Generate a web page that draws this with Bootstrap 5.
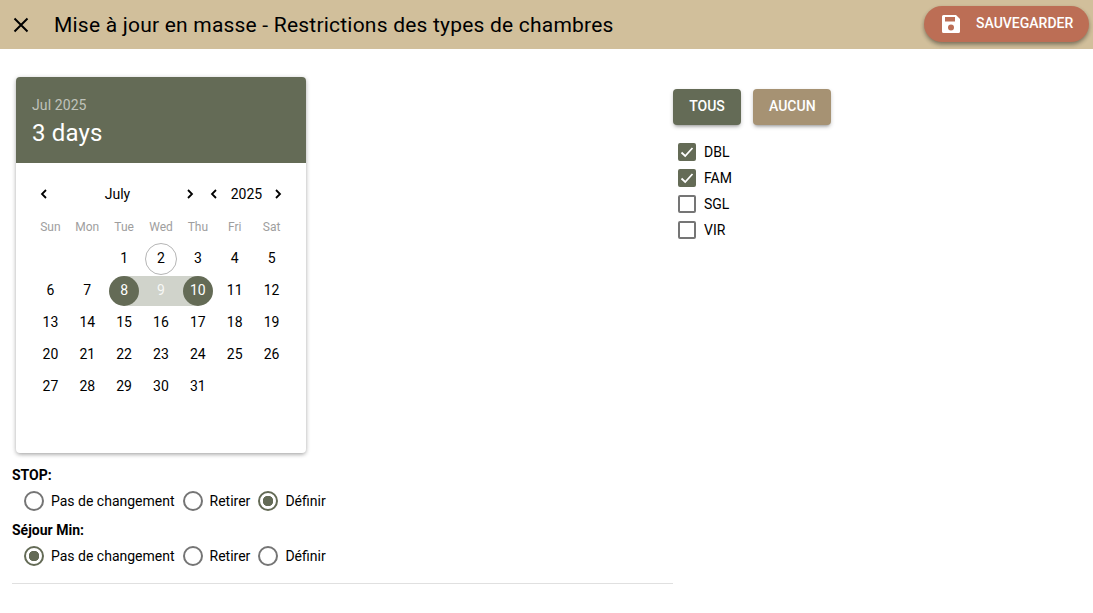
<!DOCTYPE html>
<html lang="fr">
<head>
<meta charset="utf-8">
<title>Mise à jour en masse</title>
<link rel="stylesheet" href="https://cdn.jsdelivr.net/npm/bootstrap@5.3.0/dist/css/bootstrap.min.css">
<style>
html,body{height:100%;overflow:hidden}
body{font-family:Roboto,"Liberation Sans",sans-serif;font-size:14px;color:#000;background:#fff}
.top-bar{height:49px;background:#d1bf9b;padding:0 4px 0 12px}
.close-ico{width:18px;height:18px;display:block}
.top-title{font-size:21px;font-weight:400;line-height:26px;margin:0 0 0 24px;letter-spacing:.21px}
.save-btn{height:36px;width:165px;border-radius:18px;background:#bc6e55;color:#fff;border:0;font-size:14px;font-weight:500;padding:0 16px 1px 17px;margin-top:-1px;box-shadow:0 3px 5px -1px rgba(0,0,0,.3),0 2px 4px rgba(0,0,0,.2);gap:15px}
.left-pane{width:661px;margin-left:12px;padding-top:28px}
.cal-box{width:290px;height:376px;margin-left:4px;border-radius:4px;background:#fff;overflow:hidden;box-shadow:0 2px 4px -1px rgba(0,0,0,.25),0 1px 5px rgba(0,0,0,.2)}
.cal-head{height:86px;background:#646b56;color:#fff;padding:19px 16px 0}
.cal-year{font-size:14px;line-height:18px;color:rgba(255,255,255,.6);letter-spacing:.1px}
.cal-range{font-size:24px;line-height:32px;margin-top:3px;letter-spacing:.15px}
.cal-body{padding:16px 16px 0}
.cal-nav{height:30px}
.nav-arrow{width:24px;height:30px;flex:none}
.nav-arrow svg{width:10px;height:12px}
.nav-month{width:122px;text-align:center;padding-left:1px}
.nav-year{width:40px;text-align:center;padding-left:1px}
.cal-grid{display:grid;grid-template-columns:repeat(7,1fr);grid-template-rows:33px;grid-auto-rows:32px;text-align:center}
.wk{color:#9e9e9e;font-size:12px;line-height:20px;padding-top:8px}
.dy{height:32px;display:flex;align-items:center;justify-content:center;position:relative;z-index:0}
.dy-today::before{content:"";position:absolute;left:50%;top:1px;width:32px;height:32px;margin-left:-16px;border:1.5px solid #b5b5b5;border-radius:50%}
.dy-mid{color:rgba(255,255,255,.85)}
.dy-mid::before,.dy-start::before,.dy-end::before{content:"";position:absolute;top:2px;height:30px;background:#d0d3cb;z-index:-2}
.dy-mid::before{left:0;right:0}
.dy-start::before{left:50%;right:0}
.dy-end::before{left:0;right:50%}
.dy-start,.dy-end{color:#fff}
.dy-start::after,.dy-end::after{content:"";position:absolute;left:50%;top:2px;width:30px;height:30px;margin-left:-15px;border-radius:50%;background:#646b56;z-index:-1}
.grp-label{font-weight:700;line-height:21px}
.first-label{margin-top:12px}
.radio-line{height:30px;padding-left:12px;gap:8px}
.radio-line .form-check-input{margin:0 7px 0 0;float:none}
.radio-line label{line-height:20px}
.opt-input.form-check-input{width:20px;height:20px;flex:none;border:2px solid #757575;background-color:#fff;background-image:none}
.opt-input.form-check-input:checked{border-color:#646b56;background-color:#fff;background-image:radial-gradient(circle,#646b56 0,#646b56 5px,transparent 5.5px)}
.next-label{margin-top:4px}
.sep{border:0;border-top:1px solid #e0e0e0;opacity:1;margin:12px 0 0}
.right-pane{padding-top:40px}
.act-btn{height:36px;border:0;border-radius:4px;color:#fff;font-size:14px;font-weight:500;padding:0 16px 1px;box-shadow:0 3px 3px -2px rgba(0,0,0,.25),0 2px 4px rgba(0,0,0,.2)}
.act-btn:hover,.save-btn:hover{color:#fff}
.act-all{width:68px;background:#646b56}
.act-none{width:78px;background:#a69273;margin-left:12px}
.type-list{margin:14px 0 0 5px}
.type-row{height:26px}
.type-row .form-check-input{margin:0 8px 0 0;float:none}
.tick.form-check-input{width:18px;height:18px;flex:none;border:2px solid #757575;border-radius:2px;background-color:#fff}
.tick.form-check-input:checked{border-color:#646b56;background-color:#646b56;background-size:14px;background-image:url("data:image/svg+xml,%3csvg xmlns='http://www.w3.org/2000/svg' viewBox='0 0 14 14'%3e%3cpath fill='none' stroke='%23fff' stroke-width='1.8' d='M1.5 7.5 5.2 11 12.5 3'/%3e%3c/svg%3e")}
</style>
</head>
<body>
<header class="top-bar d-flex align-items-center justify-content-between">
  <div class="d-flex align-items-center">
    <svg class="close-ico" viewBox="0 0 18 18" aria-hidden="true"><path d="M2.5 2.500 15.500 15.500M15.500 2.500 2.500 15.500" stroke="#000" stroke-width="2" fill="none"/></svg>
    <h1 class="top-title">Mise à jour en masse - Restrictions des types de chambres</h1>
  </div>
  <button type="button" class="btn save-btn d-flex align-items-center text-uppercase">
    <svg width="20" height="20" viewBox="0 0 20 20" aria-hidden="true" class="flex-shrink-0"><path fill="#fff" fill-rule="evenodd" d="M2.5 1H15l4 4v12.500a1.500 1.500 0 0 1-1.500 1.500h-15A1.500 1.500 0 0 1 1 17.500v-15A1.500 1.500 0 0 1 2.500 1ZM4 3v4.500h10V3ZM10 10.500a3 3 0 1 0 0 6 3 3 0 0 0 0-6Z"/></svg>
    Sauvegarder
  </button>
</header>
<main class="d-flex align-items-start">
  <section class="left-pane flex-shrink-0">
    <div class="cal-box">
      <div class="cal-head">
        <div class="cal-year">Jul 2025</div>
        <div class="cal-range">3 days</div>
      </div>
      <div class="cal-body">
        <div class="cal-nav d-flex align-items-center">
          <span class="nav-arrow d-flex align-items-center justify-content-center"><svg viewBox="0 0 10 12"><path d="M7 2 3 6 7 10" fill="none" stroke="#000" stroke-width="1.800"/></svg></span>
          <span class="nav-month">July</span>
          <span class="nav-arrow d-flex align-items-center justify-content-center"><svg viewBox="0 0 10 12"><path d="M3 2 7 6 3 10" fill="none" stroke="#000" stroke-width="1.800"/></svg></span>
          <span class="nav-arrow d-flex align-items-center justify-content-center"><svg viewBox="0 0 10 12"><path d="M7 2 3 6 7 10" fill="none" stroke="#000" stroke-width="1.800"/></svg></span>
          <span class="nav-year">2025</span>
          <span class="nav-arrow d-flex align-items-center justify-content-center"><svg viewBox="0 0 10 12"><path d="M3 2 7 6 3 10" fill="none" stroke="#000" stroke-width="1.800"/></svg></span>
        </div>
        <div class="cal-grid">
          <div class="wk">Sun</div><div class="wk">Mon</div><div class="wk">Tue</div><div class="wk">Wed</div><div class="wk">Thu</div><div class="wk">Fri</div><div class="wk">Sat</div>
          <div class="dy"></div><div class="dy"></div><div class="dy">1</div><div class="dy dy-today">2</div><div class="dy">3</div><div class="dy">4</div><div class="dy">5</div>
          <div class="dy">6</div><div class="dy">7</div><div class="dy dy-start">8</div><div class="dy dy-mid">9</div><div class="dy dy-end">10</div><div class="dy">11</div><div class="dy">12</div>
          <div class="dy">13</div><div class="dy">14</div><div class="dy">15</div><div class="dy">16</div><div class="dy">17</div><div class="dy">18</div><div class="dy">19</div>
          <div class="dy">20</div><div class="dy">21</div><div class="dy">22</div><div class="dy">23</div><div class="dy">24</div><div class="dy">25</div><div class="dy">26</div>
          <div class="dy">27</div><div class="dy">28</div><div class="dy">29</div><div class="dy">30</div><div class="dy">31</div>
        </div>
      </div>
    </div>
    <div class="grp-label first-label">STOP:</div>
    <div class="radio-line d-flex align-items-center">
      <div class="d-flex align-items-center"><input class="form-check-input opt-input" type="radio" name="stop" id="s1"><label for="s1">Pas de changement</label></div>
      <div class="d-flex align-items-center"><input class="form-check-input opt-input" type="radio" name="stop" id="s2"><label for="s2">Retirer</label></div>
      <div class="d-flex align-items-center"><input class="form-check-input opt-input" type="radio" name="stop" id="s3" checked><label for="s3">Définir</label></div>
    </div>
    <div class="grp-label next-label">Séjour Min:</div>
    <div class="radio-line d-flex align-items-center">
      <div class="d-flex align-items-center"><input class="form-check-input opt-input" type="radio" name="min" id="m1" checked><label for="m1">Pas de changement</label></div>
      <div class="d-flex align-items-center"><input class="form-check-input opt-input" type="radio" name="min" id="m2"><label for="m2">Retirer</label></div>
      <div class="d-flex align-items-center"><input class="form-check-input opt-input" type="radio" name="min" id="m3"><label for="m3">Définir</label></div>
    </div>
    <hr class="sep">
  </section>
  <section class="right-pane">
    <div class="d-flex">
      <button type="button" class="btn act-btn act-all text-uppercase">Tous</button>
      <button type="button" class="btn act-btn act-none text-uppercase">Aucun</button>
    </div>
    <div class="type-list">
      <div class="type-row d-flex align-items-center"><input class="form-check-input tick" type="checkbox" id="c1" checked><label for="c1">DBL</label></div>
      <div class="type-row d-flex align-items-center"><input class="form-check-input tick" type="checkbox" id="c2" checked><label for="c2">FAM</label></div>
      <div class="type-row d-flex align-items-center"><input class="form-check-input tick" type="checkbox" id="c3"><label for="c3">SGL</label></div>
      <div class="type-row d-flex align-items-center"><input class="form-check-input tick" type="checkbox" id="c4"><label for="c4">VIR</label></div>
    </div>
  </section>
</main>
<script src="https://cdn.jsdelivr.net/npm/bootstrap@5.3.0/dist/js/bootstrap.bundle.min.js"></script>
</body>
</html>
